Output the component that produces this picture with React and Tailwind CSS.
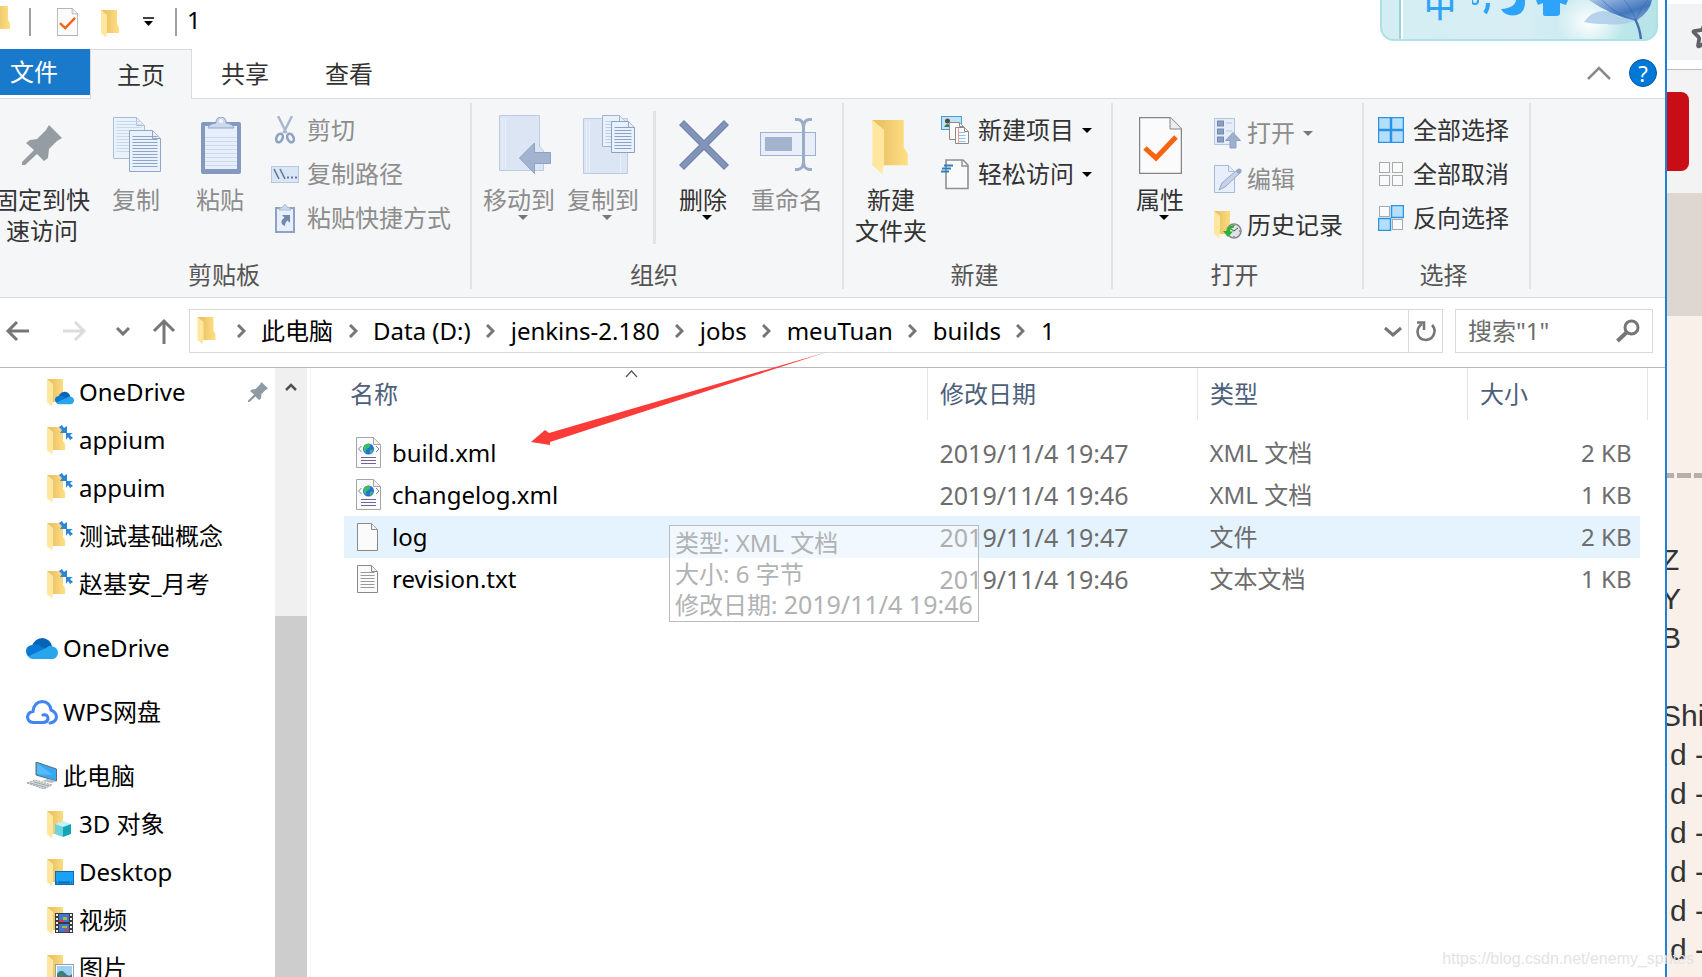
// Explorer window: quick access bar, ribbon, address bar, folder tree and file list

import { Star } from 'lucide-react'

const FONT = "font-['Noto_Sans','Noto_Sans_CJK_SC',sans-serif]"

/* ---------- icons ---------- */

function Folder({ className = 'w-[19px] h-[28px]' }) {
  return (
    <svg viewBox="0 0 19 28" className={`shrink-0 ${className}`} aria-hidden="true">
      <defs>
        <linearGradient id="folderBack" x1="0" x2="1">
          <stop offset="0.2" stopColor="#eac365" />
          <stop offset="1" stopColor="#ffdf83" />
        </linearGradient>
      </defs>
      <path d="M0 0H16V14L18 17V23H4Z" fill="url(#folderBack)" />
      <path d="M0 0L6 5V22L5 27.500L0 23Z" fill="#ffe7a0" />
      <path d="M18 23l1.500-1-2 1.300z" fill="#c9c9c9" />
    </svg>
  )
}

function Page({ x = 0, y = 0, w, h, fold = 8, fill = '#fbfbfb', stroke = '#8a8a8a', lines = 0, line = '#8fa5c6', top = 10, step = 4 }) {
  const r = x + w
  return (
    <g>
      <path d={`M${x} ${y}H${r - fold}L${r} ${y + fold}V${y + h}H${x}Z`} fill={fill} stroke={stroke} />
      <path d={`M${r - fold} ${y}V${y + fold}H${r}`} fill="#ececee" fillOpacity="0.6" stroke={stroke} />
      {Array.from({ length: lines }, (_, i) => (
        <path key={i} d={`M${x + 3} ${y + top + i * step}H${r - 3}`} stroke={line} />
      ))}
    </g>
  )
}

function Svg({ w, h, children, className = '' }) {
  return (
    <svg width={w} height={h} viewBox={`0 0 ${w} ${h}`} fill="none" className={`shrink-0 ${className}`} aria-hidden="true">
      {children}
    </svg>
  )
}

const PIN_PATH = 'M27 0L40 13 35 16 27 24 26 33 22 36 15 29 3 40H0V37L12 25 4 18 8 15 15 14 24 5Z'

const PinIcon = () => <Svg w={40} h={40}><path d={PIN_PATH} fill="#959da2" /></Svg>

const SmallPin = () => (
  <svg width="20" height="20" viewBox="0 0 40 40" aria-hidden="true"><path d={PIN_PATH} fill="#8f9ba4" /></svg>
)

const CopyIcon = () => (
  <Svg w={49} h={56} className="ml-[2px]">
    <Page x={0.5} y={0.5} w={31} h={41} fill="#e9f1fb" stroke="#a9bcd8" lines={11} line="#c9d8ec" top={4} step={3} />
    <Page x={16.5} y={13.5} w={31} h={41} fill="#e9f2fc" stroke="#92a7c8" lines={11} line="#8fa5c6" top={6} step={3} />
  </Svg>
)

const PasteIcon = () => (
  <Svg w={40} h={57} className="ml-[2px]">
    <rect x="0" y="5" width="40" height="52" rx="2" fill="#8598bd" />
    <rect x="4" y="9" width="32" height="43" fill="#e6effb" />
    {[20, 24, 28, 32, 36, 40, 44, 48].map((y) => <path key={y} d={`M4 ${y}.500H36`} stroke="#cddaeb" />)}
    <path d="M7 11Q8 7 15 6V4Q16 0 20 0T25 4V6Q32 7 33 11Z" fill="#cbd9ec" stroke="#8ea4c6" />
    <circle cx="20" cy="4" r="2" fill="#f5f6f7" />
  </Svg>
)

const ScissorsIcon = () => (
  <Svg w={20} h={28}>
    <path d="M3 0L11.500 17M17 0L8.500 17" stroke="#a9b8d0" strokeWidth="2.500" />
    <ellipse cx="4.500" cy="22" rx="3" ry="4.500" transform="rotate(25 4.500 22)" stroke="#8ea3c4" strokeWidth="2.600" />
    <ellipse cx="15.500" cy="22" rx="3" ry="4.500" transform="rotate(-25 15.500 22)" stroke="#8ea3c4" strokeWidth="2.600" />
  </Svg>
)

const PathIcon = () => (
  <Svg w={28} h={17}>
    <rect x="0.500" y="0.500" width="27" height="16" fill="#dbe6f5" stroke="#b7c7df" />
    <path d="M3 3L8 13M9 3L14 13" stroke="#5f76a2" strokeWidth="1.600" />
    <path d="M16 11.500h2M20 11.500h2M24 11.500h2" stroke="#5f76a2" strokeWidth="2" />
  </Svg>
)

const PasteShortcutIcon = () => (
  <Svg w={20} h={29}>
    <rect x="1" y="4" width="18" height="24" fill="#e6effb" stroke="#8ea3c4" strokeWidth="2" />
    <path d="M4 6Q5 3 8 3Q10-2 12 3Q15 3 16 6Z" fill="#cbd9ec" stroke="#a9bcd8" />
    <path d="M7 11H15V19L12.500 16.500Q10 18 10 22Q5 20 7 16Q8 14.500 9.500 13.500Z" fill="#7288b2" />
  </Svg>
)

const MoveIcon = () => (
  <Svg w={52} h={60} className="ml-3">
    <path d="M0.500 0.500H40.500V31L44.500 36V55.500H0.500Z" fill="#dbe5f4" stroke="#bccbe2" />
    <path d="M3.500 3V54M6.500 3V54" stroke="#eaf0fa" />
    <path d="M20.500 43L35.500 28V37.500H51.500V48.500H35.500V58.500Z" fill="#a3b3cf" stroke="#8fa2c3" />
  </Svg>
)

const CopyToIcon = () => (
  <Svg w={53} h={60} className="ml-3">
    <path d="M0.500 3.500H44.500V58.500H0.500Z" fill="#dbe5f4" stroke="#bccbe2" />
    <path d="M3.500 6V57M6.500 6V57M37.500 38V58" stroke="#eaf0fa" />
    <Page x={19.5} y={0.5} w={23} h={31} fold={6} fill="#e9f2fc" stroke="#9fb3d2" lines={8} line="#bccde5" top={6} step={3} />
    <Page x={28.5} y={6.5} w={23} h={31} fold={6} fill="#e9f2fc" stroke="#8ba2c6" lines={8} line="#8ba2c6" top={6} step={3} />
  </Svg>
)

const DeleteIcon = () => (
  <Svg w={50} h={50} className="ml-[2px]">
    <path d="M2.500 2.500L47.500 47.500M47.500 2.500L2.500 47.500" stroke="#6b80a9" strokeWidth="7" />
    <path d="M3 3L47 47M47 3L3 47" stroke="#8294b8" strokeWidth="5" />
  </Svg>
)

const RenameIcon = () => (
  <Svg w={56} h={54} className="ml-[2px]">
    <rect x="0.500" y="14.500" width="55" height="23" fill="#e8effb" stroke="#9db2d1" />
    <rect x="5" y="19" width="27" height="14" fill="#a3b3ce" />
    <path d="M35 1.500H38Q43 2 43.500 9V44Q43 51 38 51.500H35M52 1.500H49Q44 2 43.500 9M43.500 44Q44 51 49 51.500H52" stroke="#9bacc9" strokeWidth="3" />
  </Svg>
)

const NewItemIcon = () => (
  <Svg w={30} h={29}>
    <rect x="0.500" y="0.500" width="20" height="13" fill="#bfe4fa" stroke="#4d9cc8" />
    <circle cx="6.500" cy="5" r="2.500" fill="#5b4636" />
    <path d="M3 11Q6.500 5 10 11Z" fill="#2f7d5c" />
    <Page x={8.5} y={6.5} w={14} h={17} fold={4} />
    <Page x={14.5} y={11.5} w={13} h={16} fold={4} lines={4} line="#8cc5ee" top={5} step={3} />
    <path d="M17.500 12V27" stroke="#ef9a9a" />
  </Svg>
)

const EasyAccessIcon = () => (
  <Svg w={30} h={31}>
    <path d="M5 1H22L27 6V29.500H5Z" fill="#fafafa" stroke="#8f8f8f" strokeWidth="1.600" />
    <path d="M21 1V7H27" stroke="#8f8f8f" strokeWidth="1.400" />
    <path d="M3 6.500H12M1 9.500H10M0 12.500H8" stroke="#2f7fbf" strokeWidth="1.800" />
  </Svg>
)

function CheckPage({ w = 43, h = 57 }) {
  return (
    <svg width={w} height={h} viewBox="0 0 43 57" fill="none" className="shrink-0" aria-hidden="true">
      <path d="M0.500 0.500H31L42.500 12V56.500H0.500Z" fill="#fbfbfb" stroke="#858585" strokeWidth="1.500" />
      <path d="M31 0.500V12H42.500" fill="#ededed" stroke="#858585" />
      <path d="M6 31L17 41L37 20" stroke="#f9620f" strokeWidth="5" />
    </svg>
  )
}

const OpenIcon = () => (
  <Svg w={28} h={31} className="ml-[6px]">
    <rect x="0.500" y="0.500" width="20" height="26" fill="#e4edf9" stroke="#b7c6df" />
    {[3, 11, 19].map((y) => <rect key={y} x="3.500" y={y} width="6" height="5" fill="#8a9dc0" stroke="#7389b2" />)}
    <path d="M12 5H18M12 13H18" stroke="#b7c6df" />
    <path d="M19 14.500L26.500 22.500H22V30H16V22.500H11.500Z" fill="#9fb0cf" stroke="#8fa2c4" />
  </Svg>
)

const EditIcon = () => (
  <Svg w={28} h={29} className="ml-[6px]">
    <Page x={0.5} y={0.5} w={20} h={27} fold={6} fill="#e6effb" stroke="#a9bbd8" />
    <path d="M5 25L8 18L23 5L26 8L11 22Z" fill="#c5d2e8" stroke="#93a6c8" />
    <circle cx="25" cy="6" r="2.500" fill="#93a6c8" />
  </Svg>
)

const HistoryIcon = () => (
  <span className="relative block w-[28px] h-[28px] ml-[6px] shrink-0">
    <Folder className="w-[19px] h-[28px]" />
    <Svg w={19} h={18} className="absolute left-[9px] top-[11px]">
      <circle cx="11" cy="9" r="7" fill="#dfe3e6" stroke="#85898c" strokeWidth="1.600" />
      <path d="M11 9L15 6M11 9L8 7M11 3v1M11 14v1M16 9h1" stroke="#55595c" />
      <path d="M11 3Q5 3 4 9H0L5 15 10 9.500H7Q7 6 11 5.500Z" fill="#28b52e" />
    </Svg>
  </span>
)

// on: which of the four squares are highlighted
function SelectIcon({ on }) {
  const cells = [[0, 0], [13, 0], [0, 13], [13, 13]]
  return (
    <Svg w={26} h={26}>
      {cells.map(([x, y], i) => on[i]
        ? <rect key={i} x={x + 0.5} y={y + 0.5} width="12" height="12" fill="#b5defd" stroke="#2b93e6" strokeWidth="1.5" />
        : <rect key={i} x={x + 1.5} y={y + 1.5} width="10" height="10" fill="#fafafa" stroke="#a9a9a9" />)}
    </Svg>
  )
}

const Caret = ({ className = 'text-black' }) => (
  <svg width="10" height="5" viewBox="0 0 10 5" className={`shrink-0 ${className}`} aria-hidden="true">
    <path d="M0 0H10L5 5Z" fill="currentColor" />
  </svg>
)

const Chevron = ({ d, w, h, stroke = '#767676', width = 3 }) => (
  <Svg w={w} h={h}><path d={d} stroke={stroke} strokeWidth={width} /></Svg>
)

const XmlIcon = () => (
  <Svg w={26} h={32}>
    <Page x={0.5} y={0.5} w={24} h={30} fold={7} stroke="#a5a5a5" />
    <path d="M5.500 9L2.500 12L5.500 15M20 9L23 12L20 15" stroke="#7a86a0" />
    <circle cx="12.500" cy="12" r="5.500" fill="#2374d6" />
    <path d="M8 9Q11 6 14 7Q15 10 12 11Q9 13 10 16Q7 14 8 9ZM14 13Q17 12 17 13Q16 16 14 17Z" fill="#3fbf5a" />
    <path d="M5 20.500H20M5 23.500H20M5 26.500H20" stroke="#6f6590" strokeWidth="1.200" />
  </Svg>
)

const BlankIcon = () => <Svg w={26} h={30}><Page x={1.5} y={1.5} w={20} h={27} fold={6} /></Svg>

const TextIcon = () => (
  <Svg w={26} h={30}><Page x={1.5} y={1.5} w={20} h={27} fold={6} lines={6} line="#9a9a9a" top={7} step={3} /></Svg>
)

function Cloud({ w = 32, h = 21 }) {
  return (
    <svg width={w} height={h} viewBox="0 0 32 21" aria-hidden="true">
      <path d="M6 8Q9 0 17 0Q24 1 26 8L20 12Z" fill="#0563b8" />
      <path d="M6 7Q12 5 16 9L26 14L5 20Q0 18 0 13Q0 8 6 7Z" fill="#0a79d6" />
      <path d="M20 10Q24 6.500 27 8.500Q32 10 32 15Q31 21 26 21H7Q4 21 2 18.500Z" fill="#28a5ec" />
    </svg>
  )
}

const WpsCloud = () => (
  <Svg w={32} h={25}>
    <path d="M17 22.500H7Q2 22 1.500 17Q2 12 7 11.500Q8 2 16 1.500Q24 2 25 10Q30 12 30.500 17Q30 22 24 23M17 15Q22 14 22 19Q21 22.500 17 22.500" stroke="#4285f4" strokeWidth="3" strokeLinecap="round" />
  </Svg>
)

const ComputerIcon = () => (
  <Svg w={32} h={28}>
    <path d="M10 0L30.500 7V19L10 13Z" fill="#35a7f5" stroke="#5d6b75" />
    <path d="M11 1L27 13L11 12Z" fill="#6dc4fb" fillOpacity="0.6" />
    <path d="M16 19L26 21L30 19L22 17Z" fill="#b8bec3" />
    <path d="M1 21L9 18L26 23L18 27Z" fill="#d5d8da" stroke="#a1a6aa" strokeDasharray="2 1" />
    <path d="M4 21L20 25.500M8 20L23 24" stroke="#a1a6aa" />
  </Svg>
)

// folder with a small picture laid over its lower right corner
function BadgeFolder({ children, top = false }) {
  return (
    <span className="relative block w-[30px] h-[26px]">
      <Folder className="w-[19px] h-[28px]" />
      <span className={top ? 'absolute left-[12px] -top-[2px]' : 'absolute left-[8px] bottom-0'}>{children}</span>
    </span>
  )
}

const SyncFolder = () => (
  <BadgeFolder top>
    <Svg w={14} h={16}>
      <path d="M0 2L3 0L5 3L8 1V8H1L3 5Z" fill="#2b86d6" />
      <path d="M14 13L11 15L9 12L7 15V8H14L11 10Z" fill="#2b86d6" />
    </Svg>
  </BadgeFolder>
)

const Cube = () => (
  <Svg w={16} h={16}>
    <path d="M0 3L8 0L16 3L8 6Z" fill="#c0f1f5" />
    <path d="M0 3L8 6V16L0 13Z" fill="#6bd3de" />
    <path d="M16 3L8 6V16L16 13Z" fill="#12a5ba" />
  </Svg>
)

const Monitor = () => (
  <Svg w={19} h={14}>
    <rect x="0.500" y="0.500" width="18" height="13" fill="#1ba1f7" stroke="#0a6cb4" />
    <path d="M1 11.500H18" stroke="#0a6cb4" strokeWidth="2" strokeDasharray="1 1 12 1" />
  </Svg>
)

const Film = () => (
  <Svg w={18} h={20}>
    <rect width="18" height="20" fill="#3b3b3b" />
    <path d="M2 1V20M16 1V20" stroke="#eee" strokeWidth="2" strokeDasharray="2 2" />
    <rect x="4" y="1" width="10" height="8" fill="#3c78d8" />
    <rect x="4" y="11" width="10" height="8" fill="#3c78d8" />
    <path d="M8 4h4v3h-4zM7 13h5v2h-5z" fill="#b7b52c" />
    <path d="M4 8h5M9 17h4" stroke="#d23c4b" strokeWidth="2" />
  </Svg>
)

const Photo = () => (
  <Svg w={19} h={17}>
    <rect x="0.500" y="0.500" width="18" height="16" fill="#fff" stroke="#9aa0a5" />
    <rect x="2" y="2" width="15" height="13" fill="#9dd0f5" />
    <path d="M2 10Q6 4 10 9T17 10V15H2Z" fill="#3d7f78" />
  </Svg>
)

/* ---------- ribbon ---------- */

function Group({ label, width, children }) {
  return (
    <section className={`flex flex-col shrink-0 border-r-2 border-[#e1e3e5] ${width}`}>
      <div className="flex items-start h-[158px]">{children}</div>
      <h2 className="pr-[6px] text-center leading-[28px] text-[#555]">{label}</h2>
    </section>
  )
}

function LargeButton({ icon, lines, width = 'w-[84px]', disabled = false, caret = false }) {
  return (
    <button disabled={disabled} className={`flex flex-col items-center shrink-0 pt-2 ${width} ${disabled ? 'text-[#8d8d8d]' : 'text-[#333]'}`}>
      <span className="flex items-center justify-center h-[68px]">{icon}</span>
      <span className="mt-[5px] flex flex-col items-center leading-[31px] whitespace-nowrap">
        {lines.map((l) => <span key={l}>{l}</span>)}
      </span>
      {caret && <Caret className={`ml-2 ${disabled ? 'text-[#777]' : 'text-black'}`} />}
    </button>
  )
}

function SmallButton({ icon, label, disabled = false, caret = false, height = 'h-[44px]' }) {
  return (
    <button disabled={disabled} className={`flex items-center whitespace-nowrap ${height} ${disabled ? 'text-[#8d8d8d]' : 'text-[#333]'}`}>
      <span className="flex items-center justify-center w-[30px] mr-[7px]">{icon}</span>
      {label}
      {caret && <Caret className={`ml-2 ${disabled ? 'text-[#777]' : 'text-black'}`} />}
    </button>
  )
}

function Ribbon() {
  return (
    <div className="flex pt-1 pb-2 bg-[#f5f6f7] border-b border-[#dadbdc]">
      <Group label={<span className="pr-4">剪贴板</span>} width="w-[472px]">
        <div className="-ml-[6px]">
          <LargeButton icon={<PinIcon />} lines={['固定到快', '速访问']} width="w-[96px]" />
        </div>
        <LargeButton icon={<CopyIcon />} lines={['复制']} width="w-[92px]" disabled />
        <LargeButton icon={<PasteIcon />} lines={['粘贴']} width="w-[76px]" disabled />
        <div className="ml-3 pt-[5px]">
          <SmallButton icon={<ScissorsIcon />} label="剪切" disabled />
          <SmallButton icon={<PathIcon />} label="复制路径" disabled />
          <SmallButton icon={<PasteShortcutIcon />} label="粘贴快捷方式" disabled />
        </div>
      </Group>
      <Group label="组织" width="w-[372px]">
        <div className="flex ml-[5px]">
          <LargeButton icon={<MoveIcon />} lines={['移动到']} disabled caret />
          <LargeButton icon={<CopyToIcon />} lines={['复制到']} disabled caret />
        </div>
        <div className="w-[3px] h-[133px] mt-2 ml-2 mr-[5px] bg-[#e1e3e5]" />
        <LargeButton icon={<DeleteIcon />} lines={['删除']} caret />
        <LargeButton icon={<RenameIcon />} lines={['重命名']} disabled />
      </Group>
      <Group label="新建" width="w-[269px]">
        <div className="ml-[5px]">
          <LargeButton icon={<Folder className="w-[38px] h-[55px] mt-1" />} lines={['新建', '文件夹']} />
        </div>
        <div className="ml-2 pt-[5px]">
          <SmallButton icon={<NewItemIcon />} label="新建项目" caret />
          <SmallButton icon={<EasyAccessIcon />} label="轻松访问" caret />
        </div>
      </Group>
      <Group label="打开" width="w-[251px]">
        <div className="ml-[5px]">
          <LargeButton icon={<CheckPage />} lines={['属性']} caret />
        </div>
        <div className="ml-2 pt-[7px]">
          <SmallButton icon={<OpenIcon />} label="打开" height="h-[46px]" disabled caret />
          <SmallButton icon={<EditIcon />} label="编辑" height="h-[46px]" disabled />
          <SmallButton icon={<HistoryIcon />} label="历史记录" height="h-[46px]" />
        </div>
      </Group>
      <Group label="选择" width="w-[167px]">
        <div className="ml-3 pt-[5px]">
          <SmallButton icon={<SelectIcon on={[1, 1, 1, 1]} />} label="全部选择" />
          <SmallButton icon={<SelectIcon on={[0, 0, 0, 0]} />} label="全部取消" />
          <SmallButton icon={<SelectIcon on={[0, 1, 1, 0]} />} label="反向选择" />
        </div>
      </Group>
    </div>
  )
}

/* ---------- bars ---------- */

function TitleBar() {
  return (
    <header className="flex items-center h-[44px] mb-[5px]">
      <div className="w-[29px] overflow-hidden"><div className="-ml-2 pb-1"><Folder /></div></div>
      <div className="w-[2px] h-[28px] bg-[#a0a0a0]" />
      <button aria-label="属性" className="ml-[26px]"><CheckPage w={21} h={28} /></button>
      <button aria-label="新建文件夹" className="ml-[23px] pt-1"><Folder /></button>
      <button aria-label="自定义快速访问工具栏" className="ml-[23px]">
        <Svg w={11} h={10}><path d="M0 1H11" stroke="#000" strokeWidth="1.500" /><path d="M1 4H10L5.500 9Z" fill="#000" /></Svg>
      </button>
      <div className="w-[2px] h-[28px] ml-[21px] bg-[#a0a0a0]" />
      <h1 className="ml-[10px] pb-1 leading-[28px] text-black">1</h1>
    </header>
  )
}

function Tabs() {
  return (
    <nav className="flex items-start h-[50px] border-b border-[#dadbdc] text-[#333]">
      <button className="w-[90px] h-[46px] pr-[22px] bg-[#1979ca] text-white">文件</button>
      <button className="w-[102px] h-[50px] bg-[#f5f6f7] border border-b-0 border-[#dadbdc]">主页</button>
      <button className="w-[106px] h-[50px]">共享</button>
      <button className="w-[102px] h-[50px]">查看</button>
      <div className="flex items-center gap-[18px] h-[48px] ml-auto mr-2">
        <button aria-label="最小化功能区"><Chevron w={24} h={14} d="M1 13L12 2L23 13" stroke="#8a8a8a" width={2.5} /></button>
        <button aria-label="帮助" className="w-[28px] h-[28px] rounded-full bg-[#0078d7] border border-[#0b5a9c] text-white text-[22px] leading-[26px]">?</button>
      </div>
    </nav>
  )
}

const CRUMBS = ['此电脑', 'Data (D:)', 'jenkins-2.180', 'jobs', 'meuTuan', 'builds', '1']

function AddressBar() {
  return (
    <div className="flex items-center h-[70px] pb-[3px] border-b border-[#b9b9b9]">
      <button aria-label="后退" className="flex justify-center w-[34px]">
        <Svg w={24} h={22}><path d="M24 11H3M12 2L3 11L12 20" stroke="#767676" strokeWidth="3" /></Svg>
      </button>
      <button aria-label="前进" disabled className="flex justify-center w-[34px] ml-6">
        <Svg w={24} h={22}><path d="M0 11H21M12 2L21 11L12 20" stroke="#dcdcdc" strokeWidth="3" /></Svg>
      </button>
      <button aria-label="最近浏览的位置" className="flex justify-center w-6 ml-[19px]">
        <Chevron w={14} h={9} d="M1 1L7 7L13 1" />
      </button>
      <button aria-label="上移" className="flex justify-center w-6 ml-[17px]">
        <Svg w={24} h={26}><path d="M12 26V3M2 13L12 3L22 13" stroke="#767676" strokeWidth="3" /></Svg>
      </button>
      <div className="flex flex-1 items-center h-[44px] ml-[13px] pl-[7px] border border-[#d9d9d9] text-black whitespace-nowrap">
        <Folder className="w-[20px] h-[28px] mr-1" />
        {CRUMBS.map((c) => (
          <span key={c} className="flex items-center">
            <span className="flex justify-center w-[40px]"><Chevron w={9} h={14} d="M1 1L7 7L1 13" /></span>
            <a href="#" className="leading-[32px]">{c}</a>
          </span>
        ))}
        <button aria-label="以前的位置" className="ml-auto mr-[6px]"><Chevron w={18} h={11} d="M1 2L9 9L17 2" width={3} /></button>
        <button aria-label="刷新" className="flex items-center justify-center w-[34px] h-full border-l border-[#d9d9d9]">
          <Svg w={22} h={22}>
            <path d="M17 5Q20 8 19.500 12Q18 19.500 11 20Q3 19.500 2.500 12Q2.500 7 7 4" stroke="#767676" strokeWidth="2.600" />
            <path d="M2 2.500H9V10" stroke="#767676" strokeWidth="2.600" />
          </Svg>
        </button>
      </div>
      <div className="flex items-center w-[198px] h-[44px] mx-3 px-3 border border-[#d9d9d9]">
        <input aria-label="搜索" placeholder={'搜索"1"'} className="flex-1 min-w-0 outline-none placeholder:text-[#6d6d6d]" />
        <Svg w={24} h={24}>
          <circle cx="15.500" cy="8.500" r="6.500" stroke="#767676" strokeWidth="3" />
          <path d="M11 13L1.500 22" stroke="#767676" strokeWidth="4" />
        </Svg>
      </div>
    </div>
  )
}

/* ---------- folder tree ---------- */

const QUICK = [
  { label: 'OneDrive', icon: <BadgeFolder><Cloud w={19} h={14} /></BadgeFolder>, pinned: true },
  { label: 'appium', icon: <SyncFolder /> },
  { label: 'appuim', icon: <SyncFolder /> },
  { label: '测试基础概念', icon: <SyncFolder /> },
  { label: '赵基安_月考', icon: <SyncFolder /> },
]

const PC = [
  { label: '3D 对象', icon: <BadgeFolder><Cube /></BadgeFolder> },
  { label: 'Desktop', icon: <BadgeFolder><Monitor /></BadgeFolder> },
  { label: '视频', icon: <BadgeFolder><Film /></BadgeFolder> },
  { label: '图片', icon: <BadgeFolder><Photo /></BadgeFolder> },
]

function TreeChild({ item }) {
  return (
    <li>
      <a href="#" className="flex items-center h-[48px] pl-[47px] pr-[7px]">
        <span className="w-[32px] shrink-0">{item.icon}</span>
        {item.label}
        {item.pinned && <span className="ml-auto"><SmallPin /></span>}
      </a>
    </li>
  )
}

function TreeRoot({ icon, label }) {
  return (
    <li className="mt-4">
      <a href="#" className="flex items-center h-[48px] pl-[26px]">
        <span className="w-[37px] shrink-0">{icon}</span>
        {label}
      </a>
    </li>
  )
}

function Tree() {
  return (
    <div className="flex shrink-0 overflow-hidden">
      <ul className="w-[275px] text-black whitespace-nowrap">
        {QUICK.map((item) => <TreeChild key={item.label} item={item} />)}
        <TreeRoot icon={<Cloud />} label="OneDrive" />
        <TreeRoot icon={<WpsCloud />} label="WPS网盘" />
        <TreeRoot icon={<ComputerIcon />} label="此电脑" />
        {PC.map((item) => <TreeChild key={item.label} item={item} />)}
      </ul>
      <div className="flex flex-col items-center w-[32px] bg-[#f0f0f0]">
        <div className="pt-[15px] h-[248px] shrink-0"><Chevron w={12} h={8} d="M1 7L6 2L11 7" stroke="#505050" width={2.5} /></div>
        <div className="w-full flex-1 bg-[#cdcdcd]" />
      </div>
      <div className="w-[4px] border-r border-[#f3f3f3]" />
    </div>
  )
}

/* ---------- file list ---------- */

const FILES = [
  { name: 'build.xml', date: '2019/11/4 19:47', type: 'XML 文档', size: '2 KB', icon: <XmlIcon /> },
  { name: 'changelog.xml', date: '2019/11/4 19:46', type: 'XML 文档', size: '1 KB', icon: <XmlIcon /> },
  { name: 'log', date: '2019/11/4 19:47', type: '文件', size: '2 KB', icon: <BlankIcon />, hover: true },
  { name: 'revision.txt', date: '2019/11/4 19:46', type: '文本文档', size: '1 KB', icon: <TextIcon /> },
]

function FileList() {
  return (
    <div className="relative flex-1 min-w-0 pl-[33px] pr-[17px]">
      <table className="w-full table-fixed text-left text-[#6d6d6d] whitespace-nowrap">
        <colgroup>
          <col />
          <col className="w-[270px]" />
          <col className="w-[270px]" />
          <col className="w-[172px]" />
          <col className="w-[8px]" />
        </colgroup>
        <thead>
          <tr className="h-[52px] text-[#4c607a]">
            <th className="relative pl-[6px] font-normal border-r border-[#e5e5e5]">
              名称
              <span className="absolute top-[2px] left-0 right-2 flex justify-center"><Chevron w={13} h={8} d="M1 7L6.500 1L12 7" stroke="#555" width={1.2} /></span>
            </th>
            <th className="pl-3 font-normal border-r border-[#e5e5e5]">修改日期</th>
            <th className="pl-3 font-normal border-r border-[#e5e5e5]">类型</th>
            <th colSpan={2} className="pl-3 font-normal border-r border-[#e5e5e5]">大小</th>
          </tr>
          <tr className="h-3" aria-hidden="true"><td colSpan={5} /></tr>
        </thead>
        <tbody>
          {FILES.map((f) => {
            const bg = f.hover ? 'bg-[#e5f3ff]' : ''
            return (
              <tr key={f.name} className="h-[42px]">
                <td className={`pl-3 text-black ${bg}`}>
                  <a href="#" className="flex items-center"><span className="w-[36px]">{f.icon}</span>{f.name}</a>
                </td>
                <td className={`pl-3 text-[25px] ${bg}`}>{f.date}</td>
                <td className={`pl-3 ${bg}`}>{f.type}</td>
                <td className={`pr-2 text-right ${bg}`}>{f.size}</td>
                <td />
              </tr>
            )
          })}
        </tbody>
      </table>

      {/* fading tooltip */}
      <div role="tooltip" className="absolute left-[358px] top-[157px] px-[5px] py-px leading-[31px] whitespace-nowrap border border-[#b9bcbe] bg-white/45 text-[#b0b2b4]">
        <p>类型: XML 文档</p>
        <p>大小: 6 字节</p>
        <p>修改日期: <span className="text-[25px]">2019/11/4 19:46</span></p>
      </div>

      {/* annotation arrow from the meuTuan crumb to build.xml */}
      <svg width="297" height="94" viewBox="0 0 297 94" className="absolute left-[220px] -top-[16px]" aria-hidden="true">
        <path d="M0 90L14 78L18 81L296 0L19 90L19 93Z" fill="#fb3b38" />
      </svg>
    </div>
  )
}

/* ---------- things behind and above the window ---------- */

function ImeBar() {
  return (
    <div className="absolute right-[44px] -top-[40px] w-[278px] h-[81px] overflow-hidden rounded-[14px] border-2 border-[#aee0e8] bg-linear-to-r from-[#d3eef3] via-[#d8eef4] to-[#b5e4e8]">
      <div className="absolute left-[17px] top-0 h-full border-l-2 border-[#9bd3dc] border-r-2 border-r-white w-[4px]" />
      <span className="absolute left-[42px] top-[25px] text-[32px] leading-[36px] font-medium text-[#2ea3fb]">中</span>
      <svg width="180" height="40" viewBox="0 0 180 40" className="absolute left-[90px] top-[38px]" aria-hidden="true">
        <defs>
          <radialGradient id="imeGlow"><stop offset="0" stopColor="#fff" /><stop offset="1" stopColor="#fff" stopOpacity="0" /></radialGradient>
          <linearGradient id="imePetal" x1="0" x2="1" y1="0" y2="1"><stop offset="0" stopColor="#a5c1e8" /><stop offset="0.600" stopColor="#4477bd" /><stop offset="1" stopColor="#8eb4de" /></linearGradient>
        </defs>
        <ellipse cx="118" cy="22" rx="34" ry="30" fill="url(#imeGlow)" />
        <circle cx="3" cy="1" r="3" fill="none" stroke="#2ea3fb" strokeWidth="2" />
        <path d="M16 3Q16 9 13 13" fill="none" stroke="#2ea3fb" strokeWidth="4" />
        <path d="M29 9Q43 8 44 0H53Q54 12 45 15Q33 17 29 9Z" fill="#2ea3fb" />
        <path d="M64 0H96L94 5L88 3V14Q87 16 85 16H73Q71 16 71 14V3L66 5Z" fill="#2ea3fb" />
        <path d="M112 22Q122 8 138 12Q150 20 165 20Q150 26 135 24Q120 24 112 22Z" fill="#a9c9e8" fillOpacity="0.800" />
        <path d="M117 0H180Q178 12 164 21Q140 16 117 0Z" fill="url(#imePetal)" />
        <path d="M130 0Q145 16 164 20Q158 6 152 0M164 20Q168 8 176 0" fill="none" stroke="#2f5fa8" strokeOpacity="0.500" />
        <path d="M163 19Q168 28 169 40" fill="none" stroke="#456fae" strokeWidth="2.500" />
      </svg>
    </div>
  )
}

function BackgroundPage() {
  return (
    <aside className="flex flex-col w-[35px] shrink-0 overflow-hidden bg-white font-['Liberation_Sans',Arial,sans-serif] text-[30px] leading-[39px] text-[#333] whitespace-pre">
      <div className="h-[56px] mt-1 pt-4 pl-6 shrink-0 bg-[#f1f3f4]">
        <Star size={30} strokeWidth={3} color="#5f6368" />
      </div>
      <div className="h-[133px] mt-[9px] pt-[22px] shrink-0 border-t border-[#bdbdbd] bg-[#f3f3f3]">
        <div className="w-[22px] h-[79px] rounded-r-[8px] bg-[#c80d17]" />
      </div>
      <div className="-mt-[9px] h-[123px] shrink-0 bg-[#ded6d0]" />
      <div className="flex-1 bg-[#faf0ea]">
        <div className="flex gap-[3px] mt-[157px] mb-[62px] h-[5px]">
          <div className="w-[7px] bg-[#b5b0aa]" />
          <div className="w-[14px] bg-[#b5b0aa]" />
          <div className="w-[8px] bg-[#b5b0aa]" />
        </div>
        <div className="-ml-[6px]">
          <p>Z</p>
          <p>Y</p>
          <p>B</p>
          <p className="mt-[39px]">Shi</p>
        </div>
        {[0, 1, 2, 3, 4, 5].map((i) => <p key={i} className="ml-[3px]">d -</p>)}
      </div>
    </aside>
  )
}

export default function App() {
  return (
    <div className={`relative flex h-screen overflow-hidden bg-white text-[24px] leading-[32px] ${FONT}`}>
      <main className="relative flex flex-col flex-1 min-w-0 border-r-2 border-[#1c82d8]">
        <TitleBar />
        <Tabs />
        <Ribbon />
        <AddressBar />
        <div className="flex flex-1 min-h-0">
          <Tree />
          <FileList />
        </div>
      </main>
      <BackgroundPage />
      <ImeBar />
      <p className="absolute right-[8px] bottom-[8px] font-['Liberation_Sans',Arial,sans-serif] text-[16px] leading-[20px] text-[#e3e3e3]">
        https://blog.csdn.net/enemy_sprites
      </p>
    </div>
  )
}
